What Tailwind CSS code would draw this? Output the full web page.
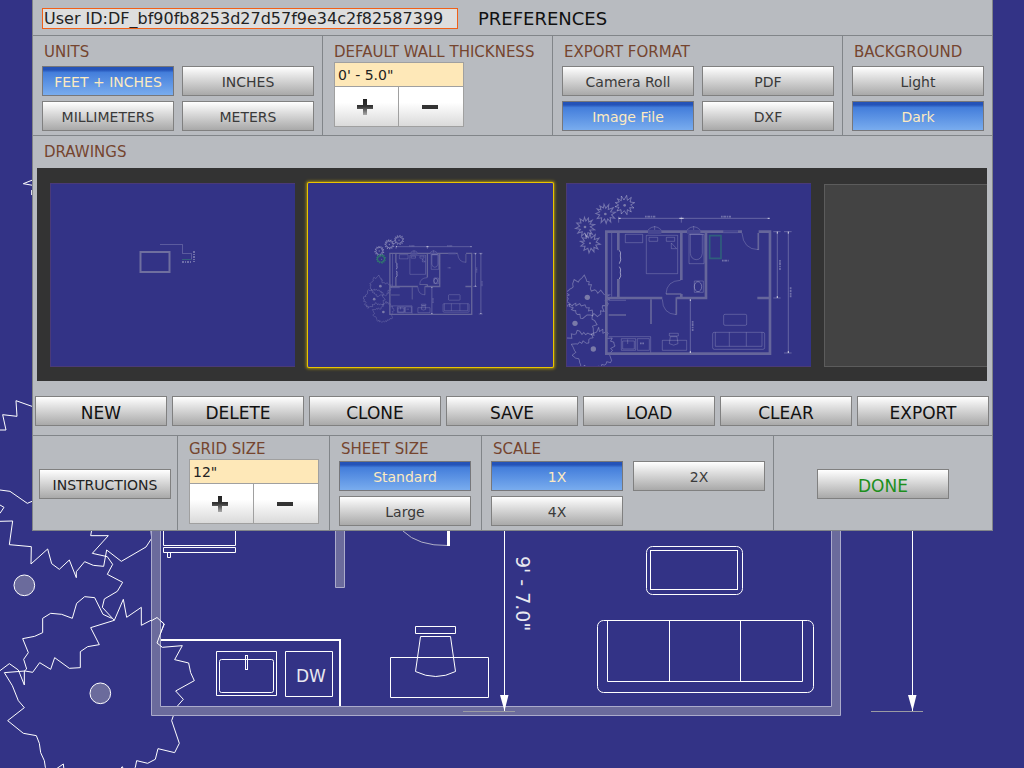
<!DOCTYPE html>
<html lang="en">
<head>
    <meta charset="UTF-8">
    <meta name="viewport" content="width=device-width, initial-scale=1.0">
    <title>Preferences</title>
    <script src="https://cdn.jsdelivr.net/npm/@tailwindcss/browser@4"></script>
</head>
<body class="relative min-h-screen overflow-x-hidden bg-[#333386] font-['DejaVu_Sans',sans-serif] text-[#3a3a3a]">

    <!-- Floor plan canvas -->
    <svg class="absolute inset-0 h-full w-full" fill="none" stroke="#fff" aria-hidden="true">
        <defs>
            <linearGradient id="ink" x1="0" y1="0" x2="0" y2="1">
                <stop offset="0" stop-color="#222"/>
                <stop offset=".45" stop-color="#333"/>
                <stop offset="1" stop-color="#aaa"/>
            </linearGradient>
            <path id="tree" d="M-287-62L-225-67L-202-63L-181-92L-148-72L-136-107L-92-75L-59-77V-125L-37-140L-2-146L-28-197L43-219L70-282L80-228L124-258V-204L170-228L193-208L170-152L187-138L247-143L224-101L266-91L272-62L283-38L227-7L250 18L229 42L215 82L238 150L224 178L174 166L166 198L143 210L110 202L106 222L80 250L67 220L30 262L0 240L-40 270L-70 240L-105 255L-110 212L-150 240L-164 222L-167 202L-178 178L-182 150L-191 127L-230 120L-277 82L-227 43L-245 22L-263-23Z"/>
            <path id="shrub" d="M-28-8L-16-10L-22-20L-10-14L-10-28L-2-16L6-30L8-15L20-24L16-10L30-8L18-1L28 8L15 7L20 20L8 13L7 28L-1 16L-10 26L-11 13L-23 17L-17 6L-29 4L-18-1Z"/>
            <g id="plan">
                <g stroke-opacity=".3">
                    <use href="#tree" transform="translate(82 382) rotate(70) scale(.23)" stroke-width="12"/>
                    <use href="#tree" transform="translate(45 460) rotate(200) scale(.23)" stroke-width="12"/>
                    <use href="#tree" transform="translate(100 537) scale(.23)" stroke-width="12"/>
                </g>
                <g stroke-opacity=".32">
                    <use href="#shrub" transform="translate(194 106)"/>
                    <use href="#shrub" transform="translate(136 132) rotate(40)"/>
                    <use href="#shrub" transform="translate(75 171) rotate(95)"/>
                </g>
                <g fill="#7a7aa8" stroke="none">
                    <circle cx="82" cy="382" r="8"/><circle cx="45" cy="460" r="8"/><circle cx="100" cy="537" r="8"/>
                    <circle cx="194" cy="106" r="4"/><circle cx="136" cy="132" r="4"/><circle cx="75" cy="171" r="4"/><circle cx="90" cy="220" r="3"/>
                </g>
                <!-- walls -->
                <path stroke="#66669b" stroke-width="8" d="M264 185H139V551H630V185H596M139 384H307M350 384H442M438 388V185M546 185H534M490 185H421M381 185H304M364 185V330M364 372V382M175 185V241M175 327V384M592 384H630"/>
                <path stroke="#66669b" stroke-width="5" d="M273 388V462M146 435H198M318 372H364M349 382V434M595 189V240"/>
                <!-- doors, windows, furniture -->
                <path stroke-opacity=".2" d="M490 183H534M490 188H534M264 183H304M264 189H304M381 183H421M381 189H421M264 180Q284 160 304 180M381 180Q401 160 421 180M284 168V180M401 168V180M155 189V380M146 391H198M318 372Q320 332 362 331M307 388Q308 432 349 434M546 189Q550 238 595 239M196 193H248V218H196ZM259 196H353V311H259ZM267 202H293V214H267ZM319 202H344V214H319ZM334 219V236H350M334 219L350 236M387 193H432V281H387ZM391 193H427V250Q425 268 409 269Q393 268 391 250ZM403 333H430V367H403ZM146 500H272V547M184 506H227V541H184ZM188 513H223V537H188ZM203 508V522M232 506H268V541H232ZM307 511H380V541H307ZM328 490H355V498H328ZM331 500H351L354 521Q341 530 328 521Z"/>
                <ellipse cx="414" cy="350" rx="11" ry="15" stroke-opacity=".3"/>
                <path stroke-opacity=".5" d="M178 241Q184 246 181 258Q185 270 178 281M178 290Q184 296 181 308Q185 318 178 327"/>
                <rect x="491" y="433" width="69" height="33" rx="4" stroke-opacity=".2"/>
                <rect x="458" y="487" width="156" height="51" rx="5" stroke-opacity=".2"/>
                <path stroke-opacity=".2" d="M466 487V529H606V487M508 487V529M559 487V529"/>
                <!-- dimensions -->
                <path stroke-opacity=".25" d="M176 145H629M176 140V158M364 140V158M652 185V384M685 185V549M391 388V549M640 185H662M640 384H662M672 185H695M672 549H695"/>
                <path stroke-opacity=".7" d="M176 145H182M358 145H371M623 145H629M652 185V191M652 378V384M685 185V191M685 543V549M391 388V393M391 543V549"/>
                <path stroke-opacity=".3" stroke-width="5" stroke-dasharray="5 2 8 2" d="M255 140H286M483 140H513M486 272H506M660 270V300M692 352V382M398 453V483M240 520H252"/>
            </g>
        </defs>

        <g transform="translate(0 520) scale(.3333)" stroke-width="3">
            <use href="#tree" x="300" y="520"/>
            <path d="M0 4L38 3L28 74L94 80L93 132L143 87L155 131L178 148L208 120L229 173V155L254 125L280 136L311 139L320 90L364 124L438 81L455 55L452 20"/>
            <path d="M277 20L272 47L325 47L277 100L322 110L338 133L322 163L368 187L352 214L313 237L307 262L343 301M335 295L309 283L284 233L254 230L230 250L217 295L185 283L152 280L128 295V338L104 349L68 356L85 398L71 418L80 447L73 453V495L55 450L28 431L0 452"/>
            <path d="M0-270H18L8-316L51-311L48-358L110-336M0-90L30-86L82-50L110-62M0-45L12-38L0-20M110-1025L70-1009L110-1002M95-990V-975"/>
            <g fill="#6b6b9c">
                <circle cx="73" cy="196" r="31"/>
                <circle cx="301" cy="520" r="31"/>
            </g>
        </g>

        <path fill="#6b6b9c" stroke="#ababcb" d="M151.5 500V715.5H840.5V500H831.5V706.5H160.5V500ZM335.5 500V587.5H344.5V500Z"/>
        <!-- outline of the tree where it hangs over the wall -->
        <path d="M151 621L157 617.500L164 624L157 643L162 647"/>
        <path d="M163.5 500V545.5H235.5V500M163.5 547.5H235.5V552.5H163.5ZM167.5 552.5V557.5H170.5V552.5"/>
        <path stroke="#b0b0c8" d="M403 531Q418 546 448 545.5"/>
        <path stroke-width="3" d="M448.5 500V546"/>
        <path stroke-width="2" d="M161 640H340V706"/>
        <path d="M216.5 651.5H276.5V695.5H216.5ZM285.5 651.5H332.5V696.5H285.5Z"/>
        <rect x="219.5" y="659.5" width="54" height="33" rx="2"/>
        <rect x="245.5" y="655.5" width="2" height="14"/>
        <path d="M390.5 657.5H488.5V697.5H390.5ZM415.5 626.5H455.5V633.5H415.5ZM420.5 636.5H450.5L455.5 671.5Q436 681.5 415.5 671.5Z"/>
        <rect x="646.5" y="546.5" width="96" height="48" rx="6"/>
        <rect x="650.5" y="550.5" width="87" height="39"/>
        <rect x="597.5" y="620.5" width="216" height="72" rx="6"/>
        <path d="M607.5 620V681.5H802.5V620M669.5 620V681M740.5 620V681"/>
        <path stroke="#9b9ba3" d="M463 711.5H515M871 711.5H923"/>
        <path d="M504.5 500V711M912.5 500V711"/>
        <path fill="#fff" stroke="none" d="M500 695H508.500L504.500 711ZM908 695H916.500L912.500 711Z"/>
        <g fill="#e8e8f0" stroke="none">
            <text x="296" y="682" font-size="17">DW</text>
            <text transform="translate(516 556) rotate(90)" font-size="19">9' - 7.0"</text>
        </g>
    </svg>

    <main class="relative ml-8 mr-[31px] border-x border-b border-[#818589] bg-[#b8bbc0]">

        <header class="flex h-9 items-center gap-5 border-b border-[#818589] pl-[9px] pt-[2px]">
            <input type="text" readonly aria-label="User ID" value="User ID:DF_bf90fb8253d27d57f9e34c2f82587399" class="h-[21px] w-[416px] border border-[#f06018] bg-[#dedede] px-px text-base leading-[19px] text-[#222]">
            <h1 class="text-lg leading-6 text-[#111]">PREFERENCES</h1>
        </header>

        <div class="grid h-[100px] grid-cols-[290fr_230fr_290fr_149fr] border-b border-[#818589] text-sm">
            <section class="border-r border-[#818589] pl-[9px] pr-2 pt-[5px]">
                <h2 class="h-[21px] pl-[2px] text-[15px] leading-[23px] text-[#75452f]">UNITS</h2>
                <div class="mt-1 grid grid-cols-2 gap-x-2 gap-y-[5px]">
                    <button class="h-[30px] border border-[#77777a] bg-linear-to-b from-[#2453b8] from-10% via-[#447edb] via-20% to-[#79acee] pt-[2px] text-[#fdeac0]">FEET + INCHES</button>
                    <button class="h-[30px] border border-[#808080] bg-linear-to-b from-white to-[#a9a9a9] pt-[2px]">INCHES</button>
                    <button class="h-[30px] border border-[#808080] bg-linear-to-b from-white to-[#a9a9a9] pt-[2px]">MILLIMETERS</button>
                    <button class="h-[30px] border border-[#808080] bg-linear-to-b from-white to-[#a9a9a9] pt-[2px]">METERS</button>
                </div>
            </section>
            <section class="border-r border-[#818589] pl-[11px] pt-[5px]">
                <h2 class="h-[21px] whitespace-nowrap text-[15px] leading-[23px] text-[#75452f]"><label for="wall">DEFAULT WALL THICKNESS</label></h2>
                <div class="w-[130px] border border-[#a0a0a0]">
                    <input id="wall" type="text" value="0' - 5.0&quot;" class="block h-6 w-full border-b border-[#a0a0a0] bg-[#fee8b8] px-[3px] text-[#222]">
                    <div class="grid grid-cols-2 divide-x divide-[#a0a0a0]">
                        <button aria-label="Increase wall thickness" class="flex h-[39px] items-center justify-center bg-linear-to-b from-white from-40% to-[#dadada] pr-[3px]">
                            <svg class="size-4" viewBox="0 0 16 16" fill="url(#ink)"><path d="M6 0H10V6H16V10H10V16H6V10H0V6H6Z"/></svg>
                        </button>
                        <button aria-label="Decrease wall thickness" class="flex h-[39px] items-center justify-center bg-linear-to-b from-white from-40% to-[#dadada] pr-[3px]">
                            <svg class="size-4" viewBox="0 0 16 16" fill="#333"><path d="M0 6H16V10H0Z"/></svg>
                        </button>
                    </div>
                </div>
            </section>
            <section class="border-r border-[#818589] pl-[9px] pr-2 pt-[5px]">
                <h2 class="h-[21px] pl-[2px] text-[15px] leading-[23px] text-[#75452f]">EXPORT FORMAT</h2>
                <div class="mt-1 grid grid-cols-2 gap-x-2 gap-y-[5px]">
                    <button class="h-[30px] border border-[#808080] bg-linear-to-b from-white to-[#a9a9a9] pt-[2px]">Camera Roll</button>
                    <button class="h-[30px] border border-[#808080] bg-linear-to-b from-white to-[#a9a9a9] pt-[2px]">PDF</button>
                    <button class="h-[30px] border border-[#77777a] bg-linear-to-b from-[#2453b8] from-10% via-[#447edb] via-20% to-[#79acee] pt-[2px] text-[#fdeac0]">Image File</button>
                    <button class="h-[30px] border border-[#808080] bg-linear-to-b from-white to-[#a9a9a9] pt-[2px]">DXF</button>
                </div>
            </section>
            <section class="pl-[9px] pr-2 pt-[5px]">
                <h2 class="h-[21px] pl-[2px] text-[15px] leading-[23px] text-[#75452f]">BACKGROUND</h2>
                <div class="mt-1 grid gap-y-[5px]">
                    <button class="h-[30px] border border-[#808080] bg-linear-to-b from-white to-[#a9a9a9] pt-[2px]">Light</button>
                    <button class="h-[30px] border border-[#77777a] bg-linear-to-b from-[#2453b8] from-10% via-[#447edb] via-20% to-[#79acee] pt-[2px] text-[#fdeac0]">Dark</button>
                </div>
            </section>
        </div>

        <section>
            <h2 class="h-8 pl-[11px] text-[15px] leading-8 text-[#75452f]">DRAWINGS</h2>
            <div class="ml-1 mr-[5px] flex h-[213px] gap-[13px] overflow-hidden bg-[#333] pl-[13px] pt-[15px]">
                <button aria-label="Drawing 1" class="h-[184px] w-[245px] shrink-0 border-y border-l border-[#4a3a78] bg-[#333386]">
                    <svg class="block" width="244" height="182" fill="none" stroke="#fff">
                        <rect x="89.500" y="68" width="29" height="20" stroke="#6f6f9f" stroke-width="2"/>
                        <path stroke-opacity=".2" d="M109 60.500H131.500V69.500H140.500V75.500"/>
                        <path stroke="#33607c" d="M131 75.500H140"/>
                        <path stroke-opacity=".3" stroke-width="2" stroke-dasharray="2 1 1 1" d="M131 78H141M143 67V78"/>
                    </svg>
                </button>
                <button aria-label="Drawing 2" class="h-[184px] w-[245px] shrink-0 rounded-[1px] bg-[#333386] shadow-[0_0_3px_2px_#a08a10] ring-1 ring-[#eac400]">
                    <svg class="block" width="245" height="184" fill="none" stroke="#fff">
                        <use href="#plan" transform="translate(58.700 39.500) scale(.1667)" stroke-width="5"/>
                        <use href="#shrub" transform="translate(73 76) scale(.16)" stroke="#2f7a6c" stroke-width="6"/>
                    </svg>
                </button>
                <button aria-label="Drawing 3" class="h-[184px] w-[245px] shrink-0 border-y border-l border-[#4a3a78] bg-[#333386]">
                    <svg class="block" width="244" height="182" fill="none" stroke="#fff">
                        <g transform="translate(-7 -14) scale(.3333)" stroke-width="3">
                            <use href="#plan"/>
                            <use href="#shrub" transform="translate(90 220) rotate(20)" stroke-opacity=".32"/>
                            <path stroke="#2f5f7c" stroke-width="5" d="M449 197H483V265H449Z"/>
                        </g>
                    </svg>
                </button>
                <button aria-label="Empty drawing" class="mt-px h-[183px] w-[245px] shrink-0 border border-[#5c5c5c] bg-[#434343]"></button>
            </div>
        </section>

        <div class="grid grid-cols-7 gap-[5px] pb-[9px] pl-[2px] pr-[3px] pt-[15px] text-[17px] text-[#111]">
            <button class="h-[30px] border border-[#808080] bg-linear-to-b from-white to-[#a9a9a9] pt-1">NEW</button>
            <button class="h-[30px] border border-[#808080] bg-linear-to-b from-white to-[#a9a9a9] pt-1">DELETE</button>
            <button class="h-[30px] border border-[#808080] bg-linear-to-b from-white to-[#a9a9a9] pt-1">CLONE</button>
            <button class="h-[30px] border border-[#808080] bg-linear-to-b from-white to-[#a9a9a9] pt-1">SAVE</button>
            <button class="h-[30px] border border-[#808080] bg-linear-to-b from-white to-[#a9a9a9] pt-1">LOAD</button>
            <button class="h-[30px] border border-[#808080] bg-linear-to-b from-white to-[#a9a9a9] pt-1">CLEAR</button>
            <button class="h-[30px] border border-[#808080] bg-linear-to-b from-white to-[#a9a9a9] pt-1">EXPORT</button>
        </div>

        <div class="grid h-[95px] grid-cols-[145fr_152fr_152fr_292fr_218fr] border-t border-[#818589] text-sm">
            <section class="flex items-center border-r border-[#818589] px-[6px] pt-px">
                <button class="h-[30px] w-full border border-[#808080] bg-linear-to-b from-white to-[#a9a9a9] pt-[2px] text-[#222]">INSTRUCTIONS</button>
            </section>
            <section class="border-r border-[#818589] pl-[11px] pt-[2px]">
                <h2 class="h-[21px] text-[15px] leading-[23px] text-[#75452f]"><label for="grid">GRID SIZE</label></h2>
                <div class="w-[130px] border border-[#a0a0a0]">
                    <input id="grid" type="text" value="12&quot;" class="block h-6 w-full border-b border-[#a0a0a0] bg-[#fee8b8] px-[3px] text-[#222]">
                    <div class="grid grid-cols-2 divide-x divide-[#a0a0a0]">
                        <button aria-label="Increase grid size" class="flex h-[39px] items-center justify-center bg-linear-to-b from-white from-40% to-[#dadada] pr-[3px]">
                            <svg class="size-4" viewBox="0 0 16 16" fill="url(#ink)"><path d="M6 0H10V6H16V10H10V16H6V10H0V6H6Z"/></svg>
                        </button>
                        <button aria-label="Decrease grid size" class="flex h-[39px] items-center justify-center bg-linear-to-b from-white from-40% to-[#dadada] pr-[3px]">
                            <svg class="size-4" viewBox="0 0 16 16" fill="#333"><path d="M0 6H16V10H0Z"/></svg>
                        </button>
                    </div>
                </div>
            </section>
            <section class="border-r border-[#818589] pl-[9px] pr-[10px] pt-[2px]">
                <h2 class="h-[21px] pl-[2px] text-[15px] leading-[23px] text-[#75452f]">SHEET SIZE</h2>
                <div class="mt-[2px] grid gap-y-[5px]">
                    <button class="h-[30px] border border-[#77777a] bg-linear-to-b from-[#2453b8] from-10% via-[#447edb] via-20% to-[#79acee] pt-[2px] text-[#fdeac0]">Standard</button>
                    <button class="h-[30px] border border-[#808080] bg-linear-to-b from-white to-[#a9a9a9] pt-[2px]">Large</button>
                </div>
            </section>
            <section class="border-r border-[#818589] pl-[9px] pr-2 pt-[2px]">
                <h2 class="h-[21px] pl-[2px] text-[15px] leading-[23px] text-[#75452f]">SCALE</h2>
                <div class="mt-[2px] grid grid-cols-2 gap-x-[10px] gap-y-[5px]">
                    <button class="h-[30px] border border-[#77777a] bg-linear-to-b from-[#2453b8] from-10% via-[#447edb] via-20% to-[#79acee] pt-[2px] text-[#fdeac0]">1X</button>
                    <button class="h-[30px] border border-[#808080] bg-linear-to-b from-white to-[#a9a9a9] pt-[2px]">2X</button>
                    <button class="h-[30px] border border-[#808080] bg-linear-to-b from-white to-[#a9a9a9] pt-[2px]">4X</button>
                </div>
            </section>
            <section class="flex items-center justify-center pt-px">
                <button class="h-[30px] w-[132px] border border-[#808080] bg-linear-to-b from-white to-[#a9a9a9] pt-1 text-[17px] text-[#1d8f1d]">DONE</button>
            </section>
        </div>
    </main>
</body>
</html>
